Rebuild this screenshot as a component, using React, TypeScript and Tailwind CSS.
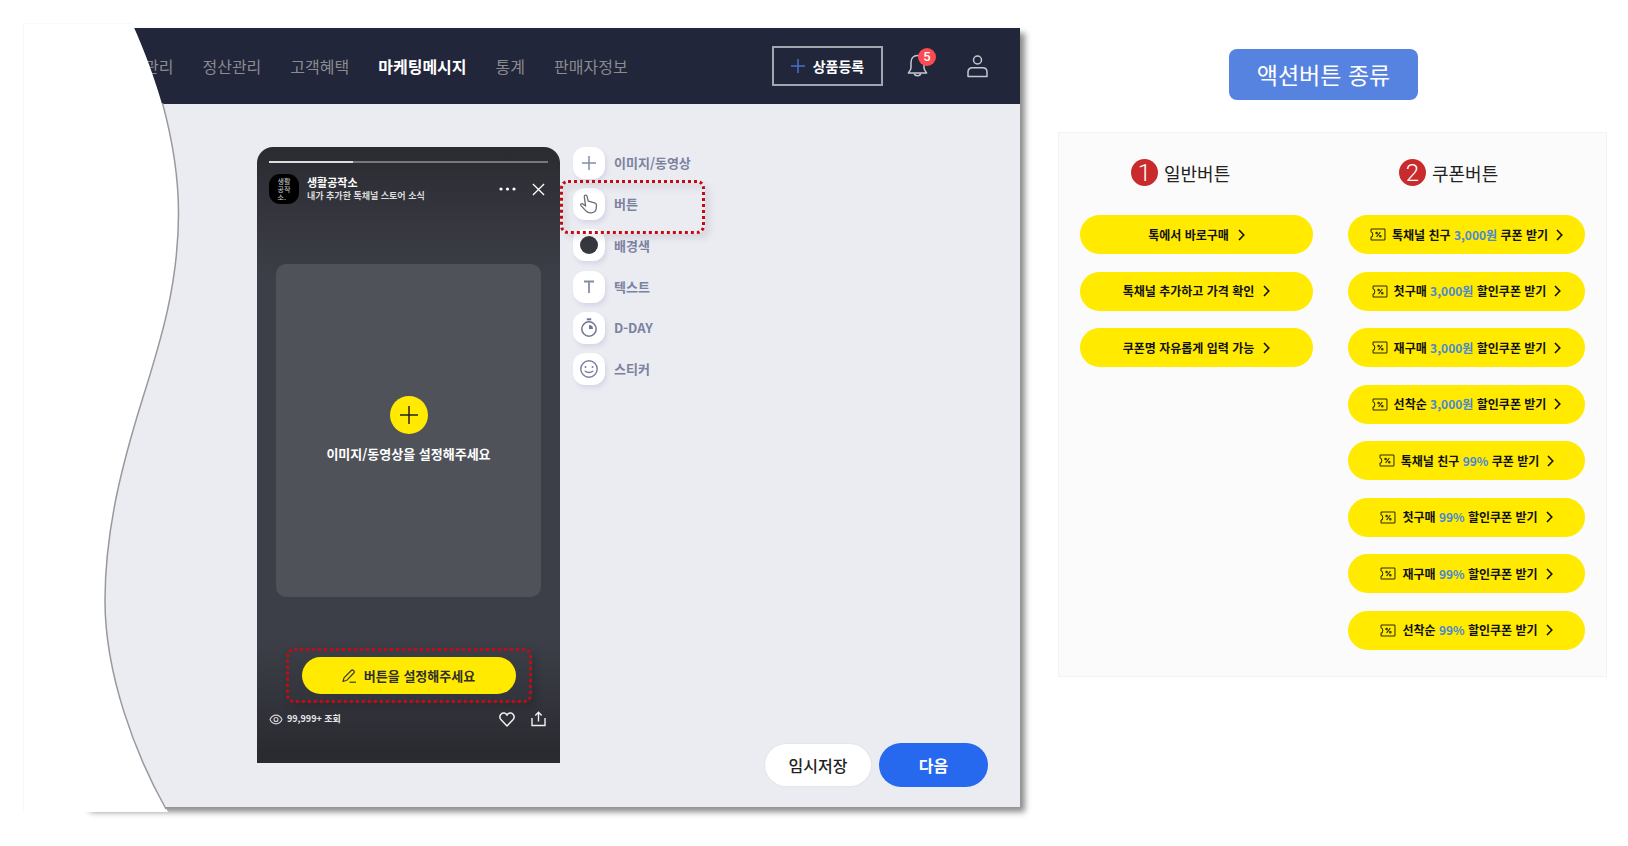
import type { ReactNode } from 'react';

type Tool = { label: string; icon: ReactNode; active?: boolean };
type Coupon = { before: string; value: string; after: string };

const navItems = ['관리', '정산관리', '고객혜택', '마케팅메시지', '통계', '판매자정보'];

const generalButtons = ['톡에서 바로구매', '톡채널 추가하고 가격 확인', '쿠폰명 자유롭게 입력 가능'];

const couponButtons: Coupon[] = [
  { before: '톡채널 친구', value: '3,000원', after: '쿠폰 받기' },
  { before: '첫구매', value: '3,000원', after: '할인쿠폰 받기' },
  { before: '재구매', value: '3,000원', after: '할인쿠폰 받기' },
  { before: '선착순', value: '3,000원', after: '할인쿠폰 받기' },
  { before: '톡채널 친구', value: '99%', after: '쿠폰 받기' },
  { before: '첫구매', value: '99%', after: '할인쿠폰 받기' },
  { before: '재구매', value: '99%', after: '할인쿠폰 받기' },
  { before: '선착순', value: '99%', after: '할인쿠폰 받기' },
];

const tools: Tool[] = [
  {
    label: '이미지/동영상',
    icon: (
      <svg width="16" height="16" viewBox="0 0 16 16" stroke="#868ca6" strokeWidth="1.5">
        <path d="M8 1v14M1 8h14" />
      </svg>
    ),
  },
  {
    label: '버튼',
    active: true,
    icon: (
      <svg width="20" height="20" viewBox="0 0 20 20" fill="none" stroke="#6b6d75" strokeWidth="1.3" strokeLinejoin="round" strokeLinecap="round">
        <path d="M6.6 12.2 5.3 2.8C5.1.9 7.7.5 8.1 2.3l1.1 4.9 6.4 1.7c1.3.4 2 1.3 1.9 2.6l-.3 3c-.3 2.4-2 4-4.6 4.3-2.5.3-4.3-.3-5.7-1.9L2 11.6c-1-1.3.5-2.5 1.8-1.7l2.6 1.9" />
      </svg>
    ),
  },
  {
    label: '배경색',
    icon: <span className="size-[18px] rounded-full bg-[#36383f]" />,
  },
  {
    label: '텍스트',
    icon: (
      <svg width="16" height="16" viewBox="0 0 16 16" stroke="#868ca6" strokeWidth="1.8">
        <path d="M3 2.5h10M8 2.5V14" />
      </svg>
    ),
  },
  {
    label: 'D-DAY',
    icon: (
      <svg width="20" height="20" viewBox="0 0 20 20" fill="none" stroke="#6f7693" strokeWidth="1.5">
        <circle cx="10" cy="11" r="7.2" />
        <path d="M7.8 1.3h4.4" strokeWidth="2" />
        <path d="M10 7v4h4A4 4 0 0 0 10 7Z" fill="#6f7693" stroke="none" />
      </svg>
    ),
  },
  {
    label: '스티커',
    icon: (
      <svg width="20" height="20" viewBox="0 0 20 20" fill="none" stroke="#7b82a0" strokeWidth="1.5" strokeLinecap="round">
        <circle cx="10" cy="10" r="8.2" />
        <path d="M6.3 12.2c1.8 1.7 5.6 1.7 7.4 0" />
        <path d="M6.5 8h.01M13.5 8h.01" strokeWidth="2" />
      </svg>
    ),
  },
];

function Chevron() {
  return (
    <svg width="7" height="12" viewBox="0 0 7 12" fill="none" stroke="#111" strokeWidth="1.6">
      <path d="M1 1l4.8 5L1 11" />
    </svg>
  );
}

function CouponIcon() {
  return (
    <svg width="16" height="13" viewBox="0 0 17 14" fill="none" stroke="#2b2900" strokeWidth="1.1">
      <path d="M1 4V1.8c0-.5.3-.8.8-.8h13.4c.5 0 .8.3.8.8v10.4c0 .5-.3.8-.8.8H1.8c-.5 0-.8-.3-.8-.8V10c1.3-.4 1.9-1.5 1.9-3S2.3 4.4 1 4Z" />
      <path d="M11 4.5 7 9.6" />
      <circle cx="7" cy="5.3" r=".8" />
      <circle cx="11" cy="8.8" r=".8" />
    </svg>
  );
}

function Header() {
  return (
    <header className="flex h-19 items-center justify-between bg-[#21263a] pl-[59px] pr-8">
      <nav className="flex gap-[29px]">
        {navItems.map((item) => (
          <a
            key={item}
            href="#"
            className={
              item === '마케팅메시지'
                ? 'whitespace-nowrap text-base font-bold text-white'
                : 'whitespace-nowrap text-base text-[#8b8b90]'
            }
          >
            {item}
          </a>
        ))}
      </nav>

      <div className="flex items-center">
        <button className="flex h-10 w-[111px] items-center justify-center gap-2 border-2 border-[#a3a6b0] text-sm font-bold text-white">
          <svg width="14" height="14" viewBox="0 0 14 14" stroke="#4a72c8" strokeWidth="1.5">
            <path d="M7 0v14M0 7h14" />
          </svg>
          상품등록
        </button>
        <button aria-label="알림" className="relative ml-6 flex size-6 items-center">
          <svg width="22" height="24" viewBox="0 0 22 24" fill="none" stroke="#c6c8d0" strokeWidth="1.5" strokeLinejoin="round">
            <path d="M10.5 1.5C6.3 1.5 4 4.5 4 8.5v5.3c0 1.6-.8 3-2.6 5.2h18.2c-1.8-2.2-2.6-3.6-2.6-5.2V8.5c0-4-2.3-7-6.5-7Z" />
            <path d="M7.3 19.5c.5 2.9 5.9 2.9 6.4 0" />
          </svg>
          <span className="absolute -top-1.5 left-[11px] flex size-[18px] items-center justify-center rounded-full bg-[#fb4b50] font-['Roboto'] text-[13px] font-medium text-white">
            5
          </span>
        </button>
        <button aria-label="내 정보" className="ml-9">
          <svg width="21" height="23" viewBox="0 0 21 23" fill="none" stroke="#c6c8d0" strokeWidth="1.5">
            <circle cx="10.5" cy="5" r="4" />
            <path d="M1 21.5V17c0-2.6 1.7-4.3 4.3-4.3h10.4c2.6 0 4.3 1.7 4.3 4.3v4.5Z" strokeLinejoin="round" />
          </svg>
        </button>
      </div>
    </header>
  );
}

function StoryPreview() {
  return (
    <div className="mb-6 flex w-[303px] shrink-0 flex-col rounded-t-2xl bg-[linear-gradient(to_bottom,#2a2b31_0%,#32333a_8%,#3d3f48_22%,#3d3f48_80%,#2a2b31_98%)] pt-[14px] pb-9 text-white">
      <div className="mx-3 h-0.5 bg-[#77787d]">
        <div className="h-full w-[30%] bg-[#dedede]" />
      </div>

      <div className="mx-3 mt-[11px] flex h-[30px] items-center">
        <div className="flex size-[30px] items-center justify-center rounded-[11px] bg-black text-[7px] leading-[8px] text-[#d0d0d0]">
          <span>
            생활
            <br />
            공작
            <br />
            소.
          </span>
        </div>
        <div className="ml-2 flex-1 pb-0.5">
          <div className="text-[11px] leading-[14px] font-bold">생활공작소</div>
          <div className="text-[9px] leading-[13px] font-bold text-[#dcdcdc]">내가 추가한 톡채널 스토어 소식</div>
        </div>
        <button aria-label="더보기">
          <svg width="17" height="4" viewBox="0 0 17 4" fill="#fff">
            <circle cx="2" cy="2" r="1.6" />
            <circle cx="8.5" cy="2" r="1.6" />
            <circle cx="15" cy="2" r="1.6" />
          </svg>
        </button>
        <button aria-label="닫기" className="ml-4 mr-[3px]">
          <svg width="13" height="13" viewBox="0 0 14 14" stroke="#fff" strokeWidth="1.4">
            <path d="M1 1l12 12M13 1L1 13" />
          </svg>
        </button>
      </div>

      <div className="mx-[19px] mt-[60px] flex h-[333px] flex-col items-center rounded-[10px] bg-[#50525a] pt-[132px]">
        <button aria-label="추가" className="flex size-[38px] items-center justify-center rounded-full bg-[#ffea00]">
          <svg width="18" height="18" viewBox="0 0 18 18" stroke="#222" strokeWidth="1.5">
            <path d="M9 0v18M0 9h18" />
          </svg>
        </button>
        <p className="mt-[10px] text-[13px] font-bold">이미지/동영상을 설정해주세요</p>
      </div>

      <div className="mx-auto mt-[51px] rounded-lg border-3 border-dotted border-[#c40a12] px-[13px] py-1.5 shadow-[4px_4px_8px_rgba(0,0,0,0.15)]">
        <button className="flex h-[37px] w-[214px] items-center justify-center gap-2 rounded-full bg-[#ffea00] text-[13px] font-bold text-[#2f2f2c]">
          <svg width="14" height="14" viewBox="0 0 14 14" fill="none" stroke="#3a3a30" strokeWidth="1.2" strokeLinejoin="round">
            <path d="M1 12.5 2 8.8 9.3 1.5c1.4-1.4 4 .9 2.5 2.5L4.7 11.3Z" />
            <path d="M7.5 13.2H14" />
          </svg>
          버튼을 설정해주세요
        </button>
      </div>

      <div className="mx-3 mt-2 flex items-center">
        <svg width="14" height="11" viewBox="0 0 14 11" fill="none" stroke="#d5d5d7" strokeWidth="1.1">
          <path d="M1 5.5C3.8-.3 10.2-.3 13 5.5 10.2 11.3 3.8 11.3 1 5.5Z" />
          <circle cx="7" cy="5.5" r="2" />
        </svg>
        <span className="ml-1 flex-1 text-[9px] font-bold text-[#e8e8e8]">99,999+ 조회</span>
        <button aria-label="좋아요">
          <svg width="16" height="15" viewBox="0 0 16 15" fill="none" stroke="#f0f0f0" strokeWidth="1.5" strokeLinejoin="round">
            <path d="M8 14 2.3 8C.6 6.2.6 3.8 2 2.2c1.8-1.9 4.8-1.5 6 1 1.2-2.5 4.2-2.9 6-1 1.4 1.6 1.4 4-.3 5.8Z" />
          </svg>
        </button>
        <button aria-label="공유" className="ml-4 mr-0.5">
          <svg width="15" height="16" viewBox="0 0 15 16" fill="none" stroke="#f0f0f0" strokeWidth="1.4">
            <path d="M1 7v7.5h13V7M7.5 10.5v-9M4.3 4.5l3.2-3.2 3.2 3.2" />
          </svg>
        </button>
      </div>
    </div>
  );
}

function ToolList() {
  return (
    <ul className="flex h-[238px] flex-col justify-between pl-[13px]">
      {tools.map((tool) => (
        <li key={tool.label} className="relative">
          <button className="flex items-center gap-[9px]">
            <span className="flex size-8 items-center justify-center rounded-xl bg-white shadow-[2px_3px_4px_rgba(120,120,170,0.18)]">
              {tool.icon}
            </span>
            <span className="whitespace-nowrap text-[13px] font-bold text-[#7b82a0]">{tool.label}</span>
          </button>
          {tool.active && (
            <div className="absolute -top-2 -left-[13px] z-10 h-[54px] w-[145px] rounded-lg border-3 border-dotted border-[#c40a12] shadow-[5px_5px_6px_rgba(0,0,0,0.08),inset_5px_6px_6px_rgba(0,0,0,0.06)]" />
          )}
        </li>
      ))}
    </ul>
  );
}

/* White sheet with a wavy right edge that covers the left part of the panel */
function WaveSheet() {
  return (
    <svg className="absolute inset-y-0 left-0 h-full w-40" viewBox="0 0 160 788" preserveAspectRatio="none" fill="none">
      <path
        d="M0 0H109C136 60 155.5 125 155.5 190C155.5 260 138 317 119 377C100 438 82 505 82 577C82 650 112 730 145 788H0Z"
        fill="#fff"
      />
      <path d="M0 788V0H109" stroke="#f3f3f3" />
      <path
        d="M139.5 80C149 115 155.5 152 155.5 190C155.5 260 138 317 119 377C100 438 82 505 82 577C82 650 112 730 143 785"
        stroke="#97999c"
        strokeWidth="1.5"
      />
    </svg>
  );
}

function Editor() {
  return (
    <section className="relative flex-1 py-[5px]">
      <div className="ml-[62px] bg-[#ebecf2] shadow-[5px_5px_6px_rgba(0,0,0,0.45)]">
        <Header />
        <div className="flex pt-[43px] pr-8 pb-5 pl-[172px]">
          <StoryPreview />
          <ToolList />
          <div className="ml-auto flex items-center gap-2 self-end">
            <button className="h-[42px] w-[106px] rounded-full bg-white text-base font-medium text-[#222] shadow-[0_0_2px_rgba(0,0,0,0.1)]">
              임시저장
            </button>
            <button className="h-11 w-[109px] rounded-full bg-[#2668ee] text-base font-bold text-white">다음</button>
          </div>
        </div>
      </div>
      <WaveSheet />
    </section>
  );
}

function ColumnTitle({ no, children }: { no: number; children: ReactNode }) {
  return (
    <h2 className="flex h-[27px] items-center gap-1.5 pl-[51px] text-lg text-[#222]">
      <span className="flex size-[27px] items-center justify-center rounded-full bg-[#c92a2c] font-['Roboto'] text-2xl font-light text-white">
        {no}
      </span>
      {children}
    </h2>
  );
}

function ActionButtonTypes() {
  return (
    <section className="w-[549px] shrink-0 pt-[26px]">
      <div className="flex justify-center pr-[18px]">
        <h1 className="flex h-[51px] w-[189px] items-center justify-center rounded-lg bg-[#5783e0] text-[23px] text-white">
          액션버튼 종류
        </h1>
      </div>

      <div className="mt-8 grid grid-cols-[233px_237px] gap-x-[35px] border border-[#f2f2f2] bg-[#fbfbfb] px-[21px] py-[26px]">
        <div>
          <ColumnTitle no={1}>일반버튼</ColumnTitle>
          <ul className="mt-[29px] flex h-[152px] flex-col justify-between">
            {generalButtons.map((label) => (
              <li key={label}>
                <button className="flex h-[39px] w-full items-center justify-center gap-[9px] rounded-full bg-[#ffea00] text-xs font-bold text-[#111]">
                  {label}
                  <Chevron />
                </button>
              </li>
            ))}
          </ul>
        </div>
        <div>
          <ColumnTitle no={2}>쿠폰버튼</ColumnTitle>
          <ul className="mt-[29px] flex h-[435px] flex-col justify-between">
            {couponButtons.map((coupon) => (
              <li key={coupon.before + coupon.value}>
                <button className="flex h-[39px] w-full items-center justify-center rounded-full bg-[#ffea00] text-xs font-bold text-[#111]">
                  <CouponIcon />
                  <span className="mr-2 ml-1.5">
                    {coupon.before} <span className="text-[#4a88d5]">{coupon.value}</span> {coupon.after}
                  </span>
                  <Chevron />
                </button>
              </li>
            ))}
          </ul>
        </div>
      </div>
    </section>
  );
}

export function App() {
  return (
    <div
      lang="ko"
      className="flex min-h-screen items-start gap-[38px] bg-white py-[23px] pr-[21px] pl-[23px] font-['Noto_Sans_CJK_KR','Noto_Sans',sans-serif]"
    >
      <Editor />
      <ActionButtonTypes />
    </div>
  );
}

export default App;
